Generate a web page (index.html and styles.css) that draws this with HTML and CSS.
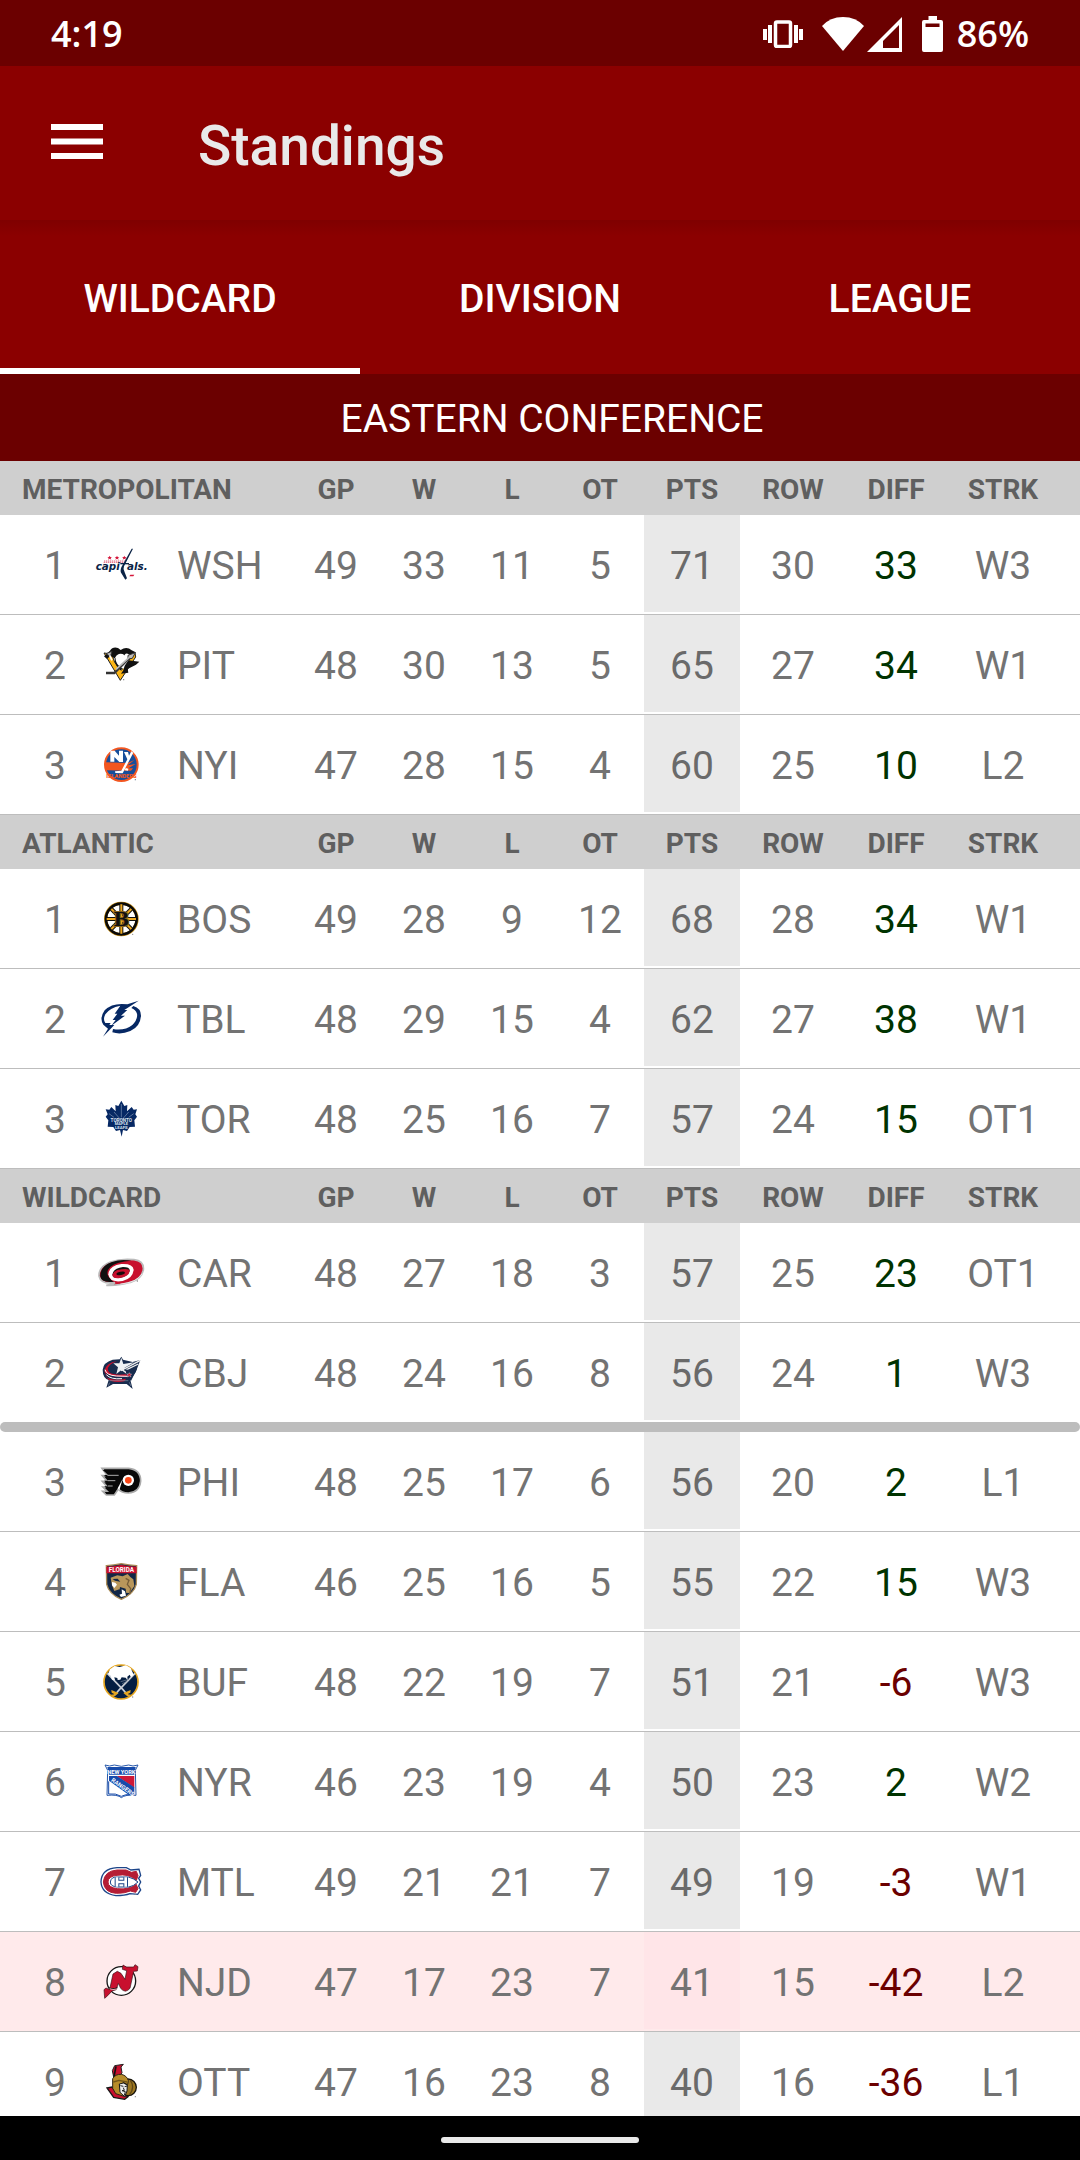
FILE: index.html
```html
<!DOCTYPE html>
<html lang="en">
<head>
<meta charset="utf-8">
<meta name="viewport" content="width=device-width, initial-scale=1">
<title>Standings</title>
<link rel="stylesheet" href="styles.css">
</head>
<body>
<div class="status">
  <span class="status-text">4:19</span>
  <div class="status-icons">
    <svg class="vibrate" width="40" height="28" viewBox="0 0 40 28" fill="#fff" aria-hidden="true"><rect x="0" y="9" width="4" height="11"/><rect x="5" y="5" width="4" height="18"/><rect x="31" y="5" width="4" height="18"/><rect x="36" y="9" width="4" height="11"/><rect x="12.5" y="2" width="15" height="24.500" rx="1.500" fill="none" stroke="#fff" stroke-width="3.500"/></svg>
    <svg class="wifi" width="42" height="34" viewBox="0 0 42 34" fill="#fff" aria-hidden="true"><path d="M0 9Q8 0 21 0T42 9L21 34Z"/></svg>
    <svg class="signal" width="35" height="35" viewBox="0 0 35 35" fill="#fff" fill-rule="evenodd" aria-hidden="true"><path d="M35 0V35H0ZM32 8L16 24V31H32Z"/></svg>
    <svg class="battery" width="21" height="36" viewBox="0 0 21 36" fill="#fff" fill-rule="evenodd" aria-hidden="true"><path d="M6.500 0H15V4H19Q21 4 21 6V34Q21 36 19 36H2Q0 36 0 34V6Q0 4 2 4H6.500ZM3.500 7.500V11H17.500V7.500Z"/></svg>
    <span class="status-text">86%</span>
  </div>
</div>
<header class="appbar">
  <button class="menu" type="button" aria-label="Menu"><svg width="52" height="36" viewBox="0 0 52 36" fill="#fff" aria-hidden="true"><rect width="52" height="6"/><rect y="14.500" width="52" height="6"/><rect y="29" width="52" height="6"/></svg></button>
  <h1>Standings</h1>
</header>
<nav class="tabs" role="tablist">
  <button type="button" role="tab" aria-selected="true">WILDCARD</button>
  <button type="button" role="tab" aria-selected="false">DIVISION</button>
  <button type="button" role="tab" aria-selected="false">LEAGUE</button>
</nav>
<main>
  <h2>EASTERN CONFERENCE</h2>
  <table>
    <colgroup><col class="c-rank"><col class="c-logo"><col class="c-team"><col class="c-num"><col class="c-num"><col class="c-num"><col class="c-num"><col class="c-pts"><col class="c-row"><col class="c-diff"><col class="c-strk"></colgroup>
    <tbody>
      <tr class="head"><th colspan="3">METROPOLITAN</th><th>GP</th><th>W</th><th>L</th><th>OT</th><th>PTS</th><th>ROW</th><th>DIFF</th><th>STRK</th></tr>
      <tr><td class="rank">1</td><td class="logo"><svg viewBox="33 67 180 132" aria-hidden="true"><g fill="#d5173b"><path d="M89 105l2 4 5 0-4 3 2 5-5-3-5 3 2-5-4-3 5 0zM111 105l2 4 5 0-4 3 2 5-5-3-5 3 2-5-4-3 5 0zM133 105l2 4 5 0-4 3 2 5-5-3-5 3 2-5-4-3 5 0zM151 162h12l-3 5h-12z"/><path d="M72 121h63M71 125h62" stroke="#d5173b" stroke-width="2" stroke-dasharray="4 2"/></g><g font-size="31" font-weight="700" font-style="italic" font-family="'DejaVu Sans', sans-serif" fill="#0b2346"><text x="47" y="147">capi</text><text x="141" y="147">als.</text></g><path d="M159 84l-27 53q-4 10 2 18l7 18-5 4-11-18q-6-6-1-19l31-56z" fill="#0b2346"/><path d="M121 129h26" stroke="#0b2346" stroke-width="4"/></svg></td><td class="team">WSH</td><td>49</td><td>33</td><td>11</td><td>5</td><td class="pts">71</td><td>30</td><td class="up">33</td><td>W3</td></tr>
      <tr><td class="rank">2</td><td class="logo"><svg viewBox="33 367 180 132" aria-hidden="true"><path d="M72 397l23 3 9 25 20 24 41-54 2 14-46 70z" fill="#fcb514" stroke="#222" stroke-width="3"/><path d="M90 390q8-13 24-8l8 6q18-12 33 1l12 6-17 8q-10-9-16-1l-3 35-9 12q-20-16-18-36l-12-6-12 7-8-7z" fill="#111"/><path d="M106 410q7-14 22-10 18 8 20 31l-18 13q-23-8-24-34z" fill="#fff"/><path d="M145 419l33 4-10 9-25 13 2 11-22 3 7-10 4-14z" fill="#111"/><path d="M78 399l18-7-5 16zM144 404l22-8-9 17-13 2z" fill="#bbb" stroke="#333" stroke-width="3"/><path d="M78 457h25l45-45" fill="none" stroke="#333" stroke-width="7"/><path d="M108 446l40-36" stroke="#bbb" stroke-width="5"/><path d="M89 404l7 15" stroke="#fff" stroke-width="5"/><circle cx="131" cy="477" r="2" fill="#777"/></svg></td><td class="team">PIT</td><td>48</td><td>30</td><td>13</td><td>5</td><td class="pts">65</td><td>27</td><td class="up">34</td><td>W1</td></tr>
      <tr><td class="rank">3</td><td class="logo"><svg viewBox="33 667 180 132" aria-hidden="true"><circle cx="124" cy="732" r="49" fill="#174e9b" stroke="#f25620" stroke-width="6"/><path d="M78 725l65 2 20-9-20 16 24-4-22 13 14 0-6 7-75-1-3-12z" fill="#f25620"/><path d="M91 723V690H104L117 705V690H129V724H118L103 709V723ZM132 694H144L147 705 154 692 160 696 128 758 106 757 105 752 124 750 142 716Z" fill="#fff"/><text x="124" y="773" text-anchor="middle" font-size="17" font-weight="900" font-family="Roboto, sans-serif" fill="#f25620">ISLANDERS</text><path d="M137 742l8 2-1 6-10-1z" fill="#fff"/><circle cx="166" cy="777" r="2" fill="#678"/></svg></td><td class="team">NYI</td><td>47</td><td>28</td><td>15</td><td>4</td><td class="pts">60</td><td>25</td><td class="up">10</td><td>L2</td></tr>
    </tbody>
    <tbody>
      <tr class="head"><th colspan="3">ATLANTIC</th><th>GP</th><th>W</th><th>L</th><th>OT</th><th>PTS</th><th>ROW</th><th>DIFF</th><th>STRK</th></tr>
      <tr><td class="rank">1</td><td class="logo"><svg viewBox="33 79 180 132" aria-hidden="true"><circle cx="124" cy="145" r="47" fill="#fff" stroke="#c68d15" stroke-width="10"/><circle cx="124" cy="145" r="46" fill="none" stroke="#090909" stroke-width="8"/><path d="M124 101V189M80 145H168M94 115L154 175M94 175L154 115" stroke="#111" stroke-width="12"/><path d="M124 101V189M80 145H168M94 115L154 175M94 175L154 115" stroke="#efa91e" stroke-width="6"/><text x="124" y="166" text-anchor="middle" font-size="56" font-weight="700" font-family="'DejaVu Serif', serif" fill="#111" stroke="#8a641a" stroke-width="6" paint-order="stroke">B</text><circle cx="158" cy="191" r="2" fill="#888"/></svg></td><td class="team">BOS</td><td>49</td><td>28</td><td>9</td><td>12</td><td class="pts">68</td><td>28</td><td class="up">34</td><td>W1</td></tr>
      <tr><td class="rank">2</td><td class="logo"><svg viewBox="33 379 180 132" aria-hidden="true"><path fill="#062864" d="M176 390L142 401Q97 395 74 419 57 443 70 462L84 474 69 498 103 463 88 463 92 457 76 457Q68 446 76 431 89 411 121 405L104 429H112L98 448H107L94 465 135 435H123L142 418H133ZM160 406Q183 413 183 435 181 468 151 481 123 493 97 485L99 475Q134 481 157 463 174 446 171 429 167 417 154 412Z"/></svg></td><td class="team">TBL</td><td>48</td><td>29</td><td>15</td><td>4</td><td class="pts">62</td><td>27</td><td class="up">38</td><td>W1</td></tr>
      <tr><td class="rank">3</td><td class="logo"><svg viewBox="33 679 180 132" aria-hidden="true"><path d="M124 690L133 706 142 703 141 722 155 709 161 717 171 716 166 731 171 738 163 749 165 768 149 769 141 781 129 778 125 798 120 778 108 781 100 769 83 768 85 749 77 738 83 731 77 716 88 717 94 709 107 722 106 703 115 706Z" fill="#062864"/><path d="M124 700v40M102 724l20 23M146 724l-20 23M87 729l15 11M161 729l-15 11" stroke="#8195b7" stroke-width="2"/><g font-family="Roboto, sans-serif" font-weight="700" text-anchor="middle" fill="#dce4f0"><text x="124" y="754" font-size="14">TORONTO</text><text x="124" y="764" font-size="12">MAPLE</text><text x="124" y="775" font-size="13">LEAFS</text></g></svg></td><td class="team">TOR</td><td>48</td><td>25</td><td>16</td><td>7</td><td class="pts">57</td><td>24</td><td class="up">15</td><td>OT1</td></tr>
    </tbody>
    <tbody>
      <tr class="head"><th colspan="3">WILDCARD</th><th>GP</th><th>W</th><th>L</th><th>OT</th><th>PTS</th><th>ROW</th><th>DIFF</th><th>STRK</th></tr>
      <tr><td class="rank">1</td><td class="logo"><svg viewBox="33 91 180 132" aria-hidden="true"><path d="M57 166Q56 138 91 124 123 113 162 117 193 121 190 148 184 176 151 185 122 195 79 194 98 190 105 186 62 191 57 166Z" fill="#c8102e" stroke="#bbb" stroke-width="5"/><path d="M61 167Q60 137 96 124 121 115 154 120 110 122 91 139 69 161 101 183 64 188 61 167Z" fill="#111"/><path d="M85 161Q87 135 124 130 159 128 161 147 159 173 128 181 88 187 85 161Z" fill="#fff"/><path d="M97 162Q99 143 129 139 151 139 149 151 143 167 119 172 99 174 97 162Z" fill="#111"/><path d="M97 162q6-15 28-16 26-3 24 6-2 15-29 20-22 3-23-10z" fill="#c8102e"/><ellipse cx="122" cy="158" rx="13" ry="5" transform="rotate(-12 122 158)" fill="#16090b"/><path d="M121 190q49-4 66-31" stroke="#fff" stroke-width="2" fill="none"/><circle cx="172" cy="181" r="2" fill="#777"/></svg></td><td class="team">CAR</td><td>48</td><td>27</td><td>18</td><td>3</td><td class="pts">57</td><td>25</td><td class="up">23</td><td>OT1</td></tr>
      <tr class="last"><td class="rank">2</td><td class="logo"><svg viewBox="33 391 180 132" aria-hidden="true"><path d="M68 447Q70 425 98 417L119 416 124 408 129 417 158 424 181 418 167 455 151 478 158 505 140 490 99 490 79 501 86 478Q68 472 68 447Z" fill="#182c4e"/><path d="M73 450Q80 426 110 422 80 433 84 449 88 466 137 461L144 467Q96 471 76 457L81 471Q105 481 138 474L133 482Q96 489 80 471Z" fill="#c8102e"/><path d="M75 447q4 17 34 19l34 1M79 462q13 15 47 12" stroke="#fff" stroke-width="3" fill="none"/><path d="M124 411l6 19 32-5-28 16 5 18-15-11-15 12 5-20-14-12h18z" fill="#eef1f4"/><path d="M181 419l-58 31M175 430l-41 20" stroke="#eee" stroke-width="4"/><path d="M133 447q22 9 36-4l-18 36" stroke="#182c4e" stroke-width="5" fill="none"/><path d="M148 456l2 4h5l-4 4 2 5-5-3-5 3 1-6-4-3h6z" fill="#c8102e" stroke="#fff"/><path d="M88 480h57M89 486l-4 9M148 485l5 11" stroke="#8290a4" stroke-width="2"/></svg></td><td class="team">CBJ</td><td>48</td><td>24</td><td>16</td><td>8</td><td class="pts">56</td><td>24</td><td class="up">1</td><td>W3</td></tr>
      <tr class="cutline"><td colspan="11"><div></div></td></tr>
      <tr><td class="rank">3</td><td class="logo"><svg viewBox="33 718 180 132" aria-hidden="true"><path d="M66 743H146Q182 747 182 781 179 815 145 817 125 817 115 805L103 823H79L68 812H82L69 799H82L67 782H82L67 765H82Z" fill="#080808" stroke="#aaa" stroke-width="5"/><path d="M68 748H146Q177 751 177 781 175 810 145 812 120 810 118 792L101 819H80L75 814H92L97 808H86L73 797H98L101 792H86L72 780H105L108 776H86L72 763H115V759H81Z" fill="#080808"/><path d="M82 764h34M83 780h23M84 796h14" stroke="#aaa" stroke-width="3"/><circle cx="145" cy="779" r="17" fill="#fff"/><path d="M128 775l-10 34-5-6z" fill="#fff"/><circle cx="145" cy="779" r="10" fill="#fa4616"/></svg></td><td class="team">PHI</td><td>48</td><td>25</td><td>17</td><td>6</td><td class="pts">56</td><td>20</td><td class="up">2</td><td>L1</td></tr>
      <tr><td class="rank">4</td><td class="logo"><svg viewBox="33 88 180 132" aria-hidden="true"><path d="M79 105Q101 104 124 99 147 104 170 105L169 161Q162 189 124 206 87 190 80 161Z" fill="#122746" stroke="#aa8b56" stroke-width="4"/><path d="M79 108q20 0 45-5 25 5 46 5v20H79z" fill="#c8102e"/><text x="124" y="125" text-anchor="middle" font-size="19" font-weight="700" font-family="Roboto, sans-serif" fill="#fff">FLORIDA</text><path d="M92 141l20-7 16 3 15-7 8 9 9 7 3 20-14 21-19-1-12-10-15 5-7-17-2-10z" fill="#b9975b"/><path d="M98 145l15-1 8 9-16-3M120 169l17 5 2 16-15 8-7-11z" fill="#122746"/><path d="M96 154l10 2 5 6-8 10-7-8zM125 176l10 6 3 13-15 4-5-7 8-3z" fill="#fff"/><path d="M137 143l10 6-5 12 10 13-3 17" stroke="#765d38" stroke-width="4" fill="none"/></svg></td><td class="team">FLA</td><td>46</td><td>25</td><td>16</td><td>5</td><td class="pts">55</td><td>22</td><td class="up">15</td><td>W3</td></tr>
      <tr><td class="rank">5</td><td class="logo"><svg viewBox="33 388 180 132" aria-hidden="true"><circle cx="123" cy="454" r="51" fill="#041e42" stroke="#e5a51e" stroke-width="5"/><path d="M82 428l47 49 14 16M165 428l-47 49-14 16" stroke="#c8cdd4" stroke-width="5" fill="none"/><path d="M84 430l6-14 14-10 15 3 19-5 14 8 9 20-8 8-4-8-7 6 1 11-6-8-12-1-4 7-8 1-1-6-9-2 2 9-9-2-4-11z" fill="#fff"/><path d="M94 478l22 9-15 12-9-7 12-1-9-5zM152 478l-22 9 15 12 9-7-12-1 9-5z" fill="#e5a51e"/><path d="M122 453l25-7M126 459l16-7" stroke="#788798" stroke-width="2"/><circle cx="158" cy="499" r="2" fill="#888"/></svg></td><td class="team">BUF</td><td>48</td><td>22</td><td>19</td><td>7</td><td class="pts">51</td><td>21</td><td class="down">-6</td><td>W3</td></tr>
      <tr><td class="rank">6</td><td class="logo"><svg viewBox="33 688 180 132" aria-hidden="true"><path d="M75 703L89 706 103 703 124 707 146 703 159 706 174 703 166 719 168 794Q136 791 124 801 113 791 81 794L83 719Z" fill="#fff" stroke="#2858aa" stroke-width="3"/><path d="M82 709H167L163 732H87Z" fill="#174bab"/><text x="124" y="729" text-anchor="middle" font-size="17" font-weight="700" font-family="Roboto, sans-serif" fill="#fff">NEW YORK</text><path d="M110 736H163V771Z" fill="#ce1837"/><path d="M87 736H111L163 770V791L147 793 87 750Z" fill="#174bab"/><text x="92" y="751" transform="rotate(35 92 751)" font-size="18" font-weight="700" font-family="Roboto, sans-serif" fill="#fff">RANGERS</text><path d="M86 752v38q21-3 38 7 14-7 25-5" stroke="#174bab" stroke-width="3" fill="none"/></svg></td><td class="team">NYR</td><td>46</td><td>23</td><td>19</td><td>4</td><td class="pts">50</td><td>23</td><td class="up">2</td><td>W2</td></tr>
      <tr><td class="rank">7</td><td class="logo"><svg viewBox="33 58 180 132" aria-hidden="true"><path d="M63 124Q64 84 111 81H139L153 88 177 86 182 104 176 113 182 124 176 136 182 148 173 161 150 159Q135 165 108 165 65 159 63 124Z" fill="#fff" stroke="#1c4589" stroke-width="4"/><path d="M70 124Q73 91 111 88H138L154 95 169 92 174 105 169 119Q147 98 111 104 84 107 84 124 84 141 113 144 148 148 168 130L174 144 167 155 151 151Q135 158 109 158 73 156 70 124Z" fill="#b51d35" stroke="#b51d35" stroke-width="3"/><path d="M91 124Q93 108 112 109H145Q161 113 174 124 161 137 146 139H113Q91 138 91 124Z" fill="#fff" stroke="#1c4589" stroke-width="3"/><path d="M111 110V138M137 110V138M111 124H137" stroke="#1c4589" stroke-width="14"/><path d="M111 110V138M137 110V138M111 124H137" stroke="#fff" stroke-width="8"/><circle cx="167" cy="161" r="2" fill="#888"/></svg></td><td class="team">MTL</td><td>49</td><td>21</td><td>21</td><td>7</td><td class="pts">49</td><td>19</td><td class="down">-3</td><td>W1</td></tr>
      <tr class="mine"><td class="rank">8</td><td class="logo"><svg viewBox="33 358 180 132" aria-hidden="true"><circle cx="124" cy="421" r="43" fill="#fff" stroke="#161616" stroke-width="4"/><path d="M89 446L99 400 112 392 123 398 135 416 140 390 127 386 129 373 139 379H161L165 372 174 378 172 391 161 392 150 443Q136 460 122 443L115 428 109 447 96 451 83 465 74 473 72 447 78 442 86 446Z" fill="#c8102e" stroke="#3a1016" stroke-width="2"/><path d="M87 441q8 7 25 0" stroke="#111" stroke-width="3" fill="none"/><path d="M89 444q8 5 22 1" stroke="#fff" stroke-width="2" fill="none"/></svg></td><td class="team">NJD</td><td>47</td><td>17</td><td>23</td><td>7</td><td class="pts">41</td><td>15</td><td class="down">-42</td><td>L2</td></tr>
      <tr><td class="rank">9</td><td class="logo"><svg viewBox="33 658 180 132" aria-hidden="true"><circle cx="144" cy="740" r="25" fill="#9c7722" stroke="#17130b" stroke-width="4"/><path d="M97 690L104 675 130 671 123 679 126 696 119 708 101 709Z" fill="#c8102e" stroke="#222" stroke-width="3"/><path d="M108 677l-6 31" stroke="#111" stroke-width="5"/><path d="M81 742l15-3 14 16 34 13-10 8-33-6z" fill="#c8102e" stroke="#171717" stroke-width="4"/><path d="M98 714q8-14 26-13 17 4 21 19l-2 12-13-7-7 11 2 14 10 18-28-9-9-16z" fill="#b78c29" stroke="#302414" stroke-width="3"/><path d="M118 730l12-3 12 6-1 18-7 17-14-13z" fill="#eee" stroke="#161616" stroke-width="3"/><path d="M121 735l9 2M134 738l7-2M130 741l3 8-7 1 10 3-3 11" stroke="#222" stroke-width="3" fill="none"/><path d="M151 719q15 19-2 43" stroke="#604716" stroke-width="4" fill="none"/><path d="M100 724l17-5 24 5" stroke="#725619" stroke-width="4" fill="none"/><circle cx="166" cy="768" r="2" fill="#888"/></svg></td><td class="team">OTT</td><td>47</td><td>16</td><td>23</td><td>8</td><td class="pts">40</td><td>16</td><td class="down">-36</td><td>L1</td></tr>
    </tbody>
  </table>
</main>
<footer class="gesture"><div class="pill"></div></footer>
</body>
</html>
```
FILE: styles.css
```css
* { box-sizing: border-box; }

body {
  margin: 0;
  height: 100vh;
  display: flex;
  flex-direction: column;
  background: #fff;
  color: #737373;
  font-family: Roboto, sans-serif;
  font-size: 39px;
}

button {
  border: 0;
  padding: 0;
  background: none;
  color: inherit;
  font: inherit;
}

.status {
  flex: none;
  height: 66px;
  display: flex;
  justify-content: space-between;
  align-items: center;
  padding: 2px 51px 0;
  background: #6b0000;
  color: #fff;
}

.status-text {
  font-family: "Open Sans", sans-serif;
  font-size: 36px;
  font-weight: 600;
  line-height: 64px;
}

.status-icons {
  display: flex;
  align-items: center;
}

.vibrate { margin-right: 19px; }
.wifi { margin-right: 3px; }
.signal { margin-right: 20px; }
.battery { margin-right: 14px; }

.appbar {
  flex: none;
  height: 154px;
  display: flex;
  align-items: center;
  gap: 95px;
  padding: 0 51px;
  background: #8b0000;
  color: #e9e9e9;
}

.menu { padding-bottom: 2px; }

.menu svg { display: block; }

h1 {
  margin: 0;
  padding-top: 6px;
  font-size: 55px;
  font-weight: 500;
  line-height: 64px;
}

.tabs {
  flex: none;
  height: 154px;
  display: grid;
  grid-template-columns: repeat(3, 1fr);
  background: linear-gradient(#7f0000, #8b0000 16px);
  color: #fff;
}

.tabs button {
  padding-top: 10px;
  border-bottom: 6px solid transparent;
  font-weight: 500;
}

.tabs button[aria-selected="true"] { border-bottom-color: #fff; }

main {
  flex: 1;
  min-height: 0;
  overflow-y: auto;
  scrollbar-width: none;
}

h2 {
  margin: 0;
  padding: 4px 0 0 24px;
  background: #6b0000;
  color: #fff;
  font-size: 39px;
  font-weight: 400;
  line-height: 83px;
  text-align: center;
}

table {
  width: 100%;
  table-layout: fixed;
  border-collapse: separate;
  border-spacing: 0;
}

.c-rank { width: 84px; }
.c-logo { width: 74px; }
.c-team { width: 134px; }
.c-num { width: 88px; }
.c-pts { width: 96px; }
.c-row { width: 106px; }
.c-diff { width: 100px; }
.c-strk { width: 134px; }

th {
  height: 54px;
  padding: 4px 0 0;
  background: #cfcfcf;
  color: #5f5f5f;
  font-size: 28px;
  font-weight: 700;
  line-height: 32px;
}

th:first-child {
  padding-left: 22px;
  text-align: left;
}

th:last-child, td:last-child { padding-right: 20px; }

td {
  height: 100px;
  padding: 2px 0 0;
  border-bottom: 1px solid #bdbdbd;
  line-height: 46px;
  text-align: center;
}

.rank { padding-left: 26px; }

.logo { padding: 0; }

.logo svg {
  display: block;
  width: 60px;
  height: 44px;
  margin: 0 auto;
}

.team {
  padding-left: 19px;
  text-align: left;
}

.pts {
  background: linear-gradient(#e9e9e9, #e9e9e9) no-repeat 0 0 / 100% 97px;
  color: #6a6a6a;
}

.up { color: #003300; }
.down { color: #6b0000; }

.last td {
  height: 99px;
  border-bottom: 0;
}

.cutline td:last-child {
  height: 10px;
  padding: 0;
  border: 0;
  line-height: 0;
  background: #fff;
}

.cutline div {
  height: 10px;
  border-radius: 5px;
  background: #bdbdbd;
}

.mine { background: #ffeaeb; }

.mine .pts {
  background-image: linear-gradient(#ffe5e8, #ffe5e8);
  color: #737373;
}

.gesture {
  flex: none;
  height: 44px;
  display: flex;
  justify-content: center;
  padding-top: 21px;
  background: #000;
}

.pill {
  width: 198px;
  height: 6px;
  border-radius: 3px;
  background: #e9e9e9;
}
```
